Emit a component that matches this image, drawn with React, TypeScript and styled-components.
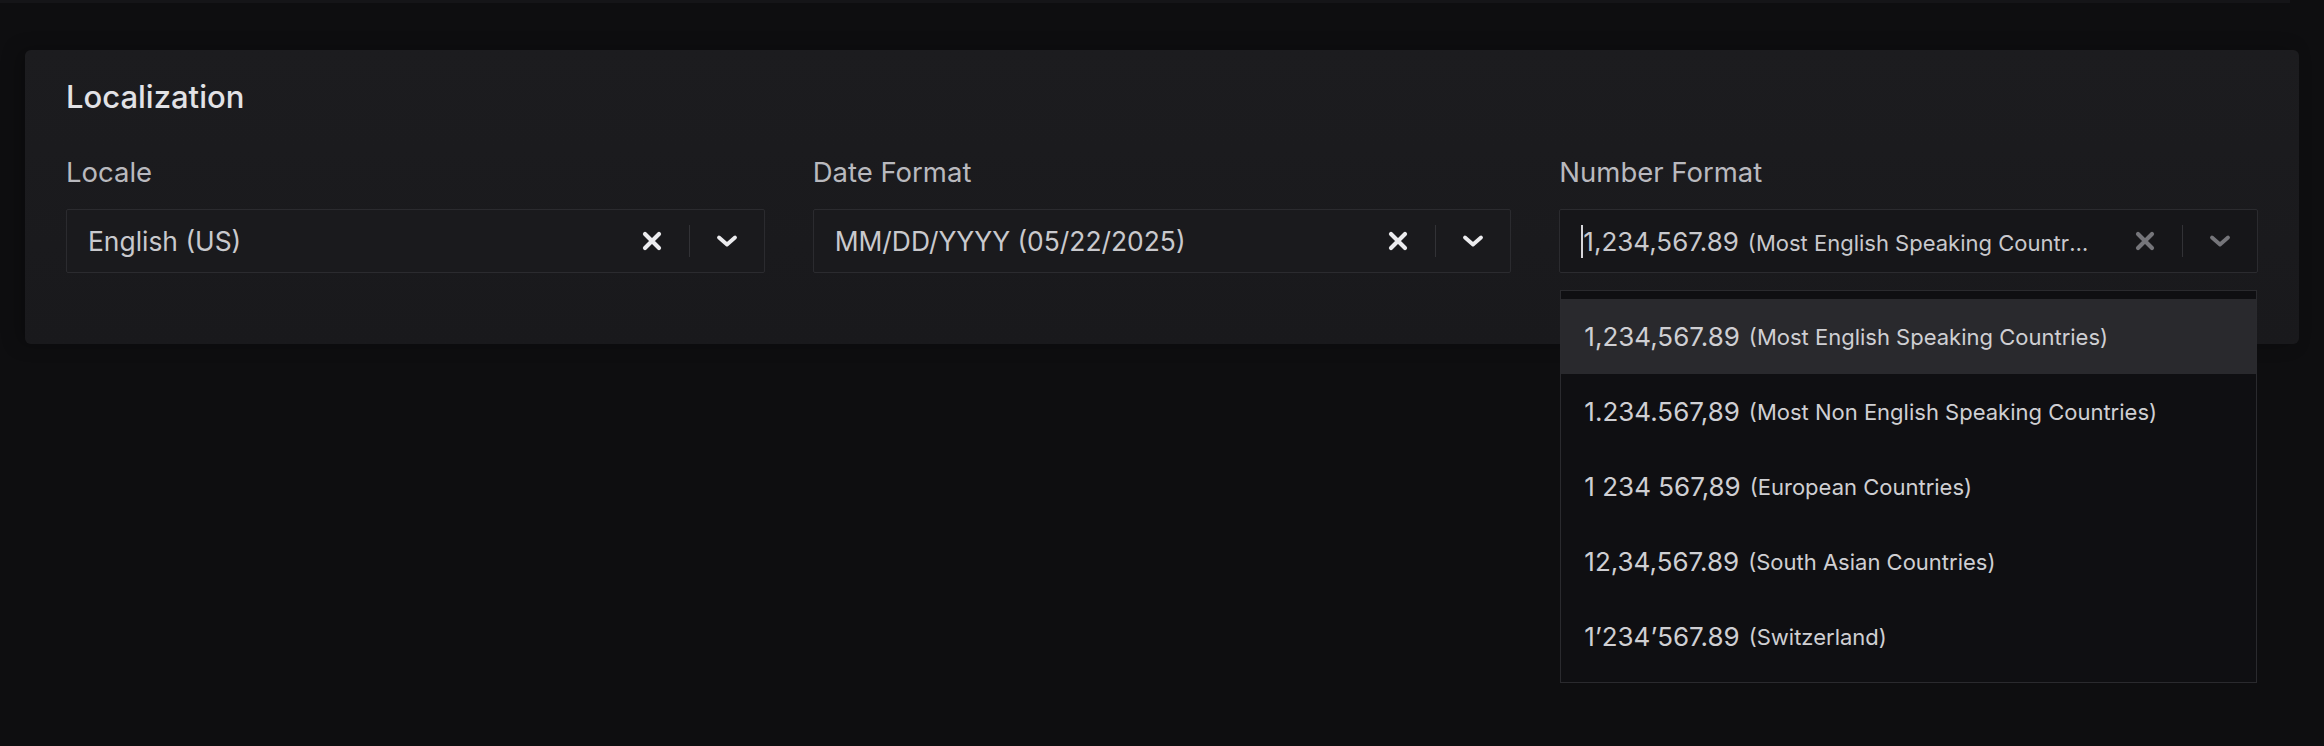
import React, { FC } from 'react'
import styled, { createGlobalStyle } from 'styled-components'

const GlobalStyle = createGlobalStyle`
  html, body {
    margin: 0;
    padding: 0;
    background: #0e0e10;
  }
  body {
    font-family: Inter, 'Open Sans', sans-serif;
    -webkit-font-smoothing: antialiased;
  }
`

interface Option {
  value: string
  region: string
}

const NUMBER_OPTIONS: Option[] = [
  { value: '1,234,567.89', region: '(Most English Speaking Countries)' },
  { value: '1.234.567,89', region: '(Most Non English Speaking Countries)' },
  { value: '1 234 567,89', region: '(European Countries)' },
  { value: '12,34,567.89', region: '(South Asian Countries)' },
  { value: '1\u2019234\u2019567.89', region: '(Switzerland)' },
]

const ClearIcon: FC = () => (
  <svg width={22} height={22} viewBox="0 0 22 22" fill="none">
    <path
      d="M4 4L18 18M18 4L4 18"
      stroke="currentColor"
      strokeWidth={4.2}
      strokeLinecap="round"
    />
  </svg>
)

const ChevronIcon: FC = () => (
  <svg width={24} height={14} viewBox="0 0 24 14" fill="none">
    <path
      d="M4 3.5L12 10.5L20 3.5"
      stroke="currentColor"
      strokeWidth={3.8}
      strokeLinecap="round"
      strokeLinejoin="round"
    />
  </svg>
)

interface SelectProps {
  muted?: boolean
  children: React.ReactNode
}

const Select: FC<SelectProps> = ({ muted, children }) => (
  <Control $muted={muted}>
    <ValueArea>{children}</ValueArea>
    <Indicator $muted={muted}>
      <ClearIcon />
    </Indicator>
    <Separator />
    <Indicator $muted={muted}>
      <ChevronIcon />
    </Indicator>
  </Control>
)

const App: FC = () => (
  <Page>
    <GlobalStyle />
    <TopEdge />
    <Card>
      <Title>Localization</Title>
      <Fields>
        <Field>
          <Label>Locale</Label>
          <Select>
            <Value>English (US)</Value>
          </Select>
        </Field>

        <Field>
          <Label>Date Format</Label>
          <Select>
            <Value>MM/DD/YYYY (05/22/2025)</Value>
          </Select>
        </Field>

        <Field>
          <Label>Number Format</Label>
          <Select muted>
            <Caret />
            <Truncated>
              <Big>1,234,567.89</Big>(Most English Speaking Countries)
            </Truncated>
          </Select>
          <Menu>
            {NUMBER_OPTIONS.map((option, index) => (
              <MenuItem key={option.value} $active={index === 0}>
                <Big>{option.value}</Big>
                <Small>{option.region}</Small>
              </MenuItem>
            ))}
          </Menu>
        </Field>
      </Fields>
    </Card>
  </Page>
)

const Page = styled.div`
  min-height: 746px;
  background: #0e0e10;
  overflow: hidden;
`

const TopEdge = styled.div`
  height: 3px;
  margin-right: 34px;
  background: #151518;
`

const Card = styled.section`
  margin: 47px 25px 0;
  padding: 29px 41px 71px;
  border-radius: 6px;
  background: linear-gradient(180deg, #1c1c1f 0%, #19191c 100%);
  box-shadow: -6px 0 18px rgba(0, 0, 0, 0.25);
`

const Title = styled.h2`
  margin: 0 0 41px;
  font-size: 31px;
  line-height: 36px;
  font-weight: 500;
  color: #e2e2e6;
`

const Fields = styled.div`
  display: grid;
  grid-template-columns: repeat(3, minmax(0, 1fr));
  column-gap: 48px;
`

const Field = styled.div`
  position: relative;
  min-width: 0;
  display: flex;
  flex-direction: column;
`

const Label = styled.label`
  margin-bottom: 21px;
  font-size: 27.5px;
  line-height: 32px;
  color: #b9b9be;
`

const Control = styled.div<{ $muted?: boolean }>`
  display: flex;
  align-items: center;
  height: 64px;
  box-sizing: border-box;
  border: 1px solid #2b2b2f;
  border-radius: 2px;
  background: ${(p) => (p.$muted ? '#161619' : '#1a1a1d')};
`

const ValueArea = styled.div`
  flex: 1;
  min-width: 0;
  display: flex;
  align-items: center;
  padding-left: 21px;
`

const Value = styled.span`
  font-size: 26.4px;
  color: #c9c9cd;
  white-space: nowrap;
`

const Caret = styled.span`
  flex: none;
  width: 2px;
  height: 33px;
  background: #d6d6da;
`

const Truncated = styled.span`
  min-width: 0;
  padding-right: 18px;
  font-size: 22px;
  color: #c9c9cd;
  white-space: nowrap;
  overflow: hidden;
  text-overflow: ellipsis;
`

const Big = styled.span`
  font-size: 26px;
  margin-right: 9px;
`

const Small = styled.span`
  font-size: 22px;
`

const Indicator = styled.div<{ $muted?: boolean }>`
  flex: none;
  width: 74px;
  display: flex;
  align-items: center;
  justify-content: center;
  color: ${(p) => (p.$muted ? '#75757a' : '#ececef')};
`

const Separator = styled.div`
  flex: none;
  width: 1px;
  height: 32px;
  background: #323236;
`

const Menu = styled.ul`
  position: absolute;
  top: calc(100% + 17px);
  left: 1px;
  right: 1px;
  z-index: 2;
  margin: 0;
  padding: 8px 0;
  list-style: none;
  border: 1px solid #2a2a2e;
  background: #0f0f12;
`

const MenuItem = styled.li<{ $active?: boolean }>`
  display: flex;
  align-items: center;
  height: 75px;
  padding-left: 23px;
  color: #cfcfd3;
  white-space: nowrap;
  background: ${(p) => (p.$active ? '#29292d' : 'transparent')};
`

export default App
